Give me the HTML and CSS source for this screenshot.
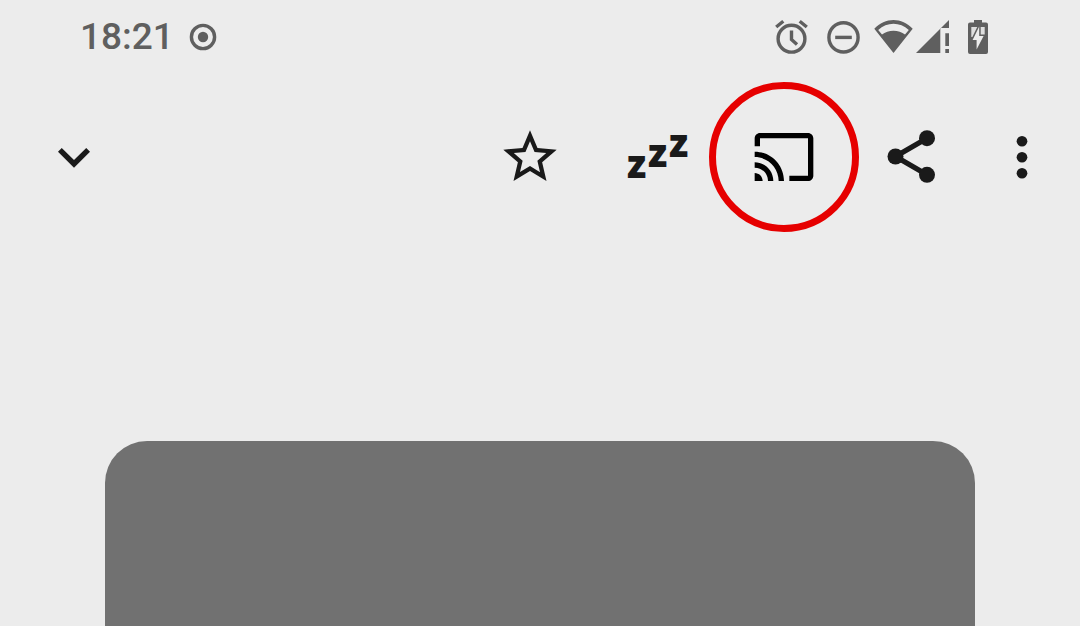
FILE: index.html
```html
<!DOCTYPE html>
<html lang="en">
<head>
<meta charset="utf-8">
<meta name="viewport" content="width=device-width, initial-scale=1">
<title>Player</title>
<link rel="stylesheet" href="styles.css">
</head>
<body>
<header class="status-bar">
  <time class="clock">18:21</time>
  <svg class="status-icon" width="28" height="28" viewBox="0 0 28 28" aria-hidden="true">
    <circle cx="14" cy="14" r="11.6" fill="none" stroke="currentColor" stroke-width="3.4"/>
    <circle cx="14" cy="14" r="5.2" fill="currentColor"/>
  </svg>
  <div class="status-group">
    <svg class="status-icon" width="40" height="36" viewBox="0 0 40 36" fill="none" stroke="currentColor" stroke-width="3.4" aria-hidden="true">
      <circle cx="17.5" cy="19.7" r="13.4"/>
      <path d="M2.2 8 9.3 2.2M25.7 2.2 32.8 8M17.5 11.5V20.5L23 25.4"/>
    </svg>
    <svg class="status-icon" width="36" height="36" viewBox="0 0 36 36" fill="none" stroke="currentColor" stroke-width="3.4" aria-hidden="true">
      <circle cx="17.5" cy="18.4" r="14.6"/>
      <path d="M9.2 18.4H25.8"/>
    </svg>
    <svg class="status-icon" width="82" height="36" viewBox="0 0 82 36" fill="currentColor" aria-hidden="true">
      <path fill-rule="evenodd" d="M0.3 9.8C11 -1.8 28 -1.8 38.7 9.8L19.5 34ZM4.2 11 8 15.6C14 10.4 25 10.4 31 15.6L34.8 11C26 2.8 13 2.8 4.2 11Z"/>
      <path d="M42 34 75 1V9H66.3V34ZM71.3 14.3H75V27H71.3ZM71.3 30H75V34H71.3Z"/>
    </svg>
    <svg class="status-icon" width="20" height="36" viewBox="0 0 20 36" fill="currentColor" aria-hidden="true">
      <path d="M6 1H14V3.6H18Q20 3.6 20 5.6V33Q20 35 18 35H2Q0 35 0 33V5.6Q0 3.6 2 3.6H6Z"/>
      <path class="cutout" d="M3.3 8H16.7V18H3.3Z"/>
      <path class="bolt" d="M11.2 7.5 4.6 21H8.6V30.5L15.6 17H11.2Z"/>
    </svg>
  </div>
</header>

<nav class="toolbar" aria-label="Player actions">
  <button class="tool tool-collapse" type="button" aria-label="Collapse">
    <svg class="icon" viewBox="0 0 24 24" aria-hidden="true"><path d="M7.41 8.59 12 13.17l4.59-4.58L18 10l-6 6-6-6z"/></svg>
  </button>
  <button class="tool" type="button" aria-label="Favourite">
    <svg class="icon" viewBox="0 0 24 24" aria-hidden="true"><path fill-rule="evenodd" d="M22 9.24l-7.19-.62L12 2 9.19 8.63 2 9.24l5.46 4.73L5.82 21 12 17.27 18.18 21l-1.63-7.03L22 9.24zM12 15.4l-3.76 2.27 1-4.28-3.32-2.88 4.38-.38L12 6.1l1.71 4.04 4.38.38-3.32 2.88 1 4.28L12 15.4z"/></svg>
  </button>
  <button class="tool" type="button" aria-label="Sleep timer">
    <svg class="icon zzz" viewBox="0 0 64 64" aria-hidden="true"><text x="2" y="53">z</text><text x="23" y="42">z</text><text x="44" y="32">z</text></svg>
  </button>
  <button class="tool tool-cast" type="button" aria-label="Cast">
    <svg class="icon" viewBox="0 0 24 24" aria-hidden="true"><path d="M21 3H3c-1.1 0-2 .9-2 2v3h2V5h18v14h-7v2h7c1.1 0 2-.9 2-2V5c0-1.1-.9-2-2-2zM1 18v3h3c0-1.66-1.34-3-3-3zm0-4v2c2.76 0 5 2.24 5 5h2c0-3.87-3.13-7-7-7zm0-4v2c4.97 0 9 4.03 9 9h2c0-6.08-4.93-11-11-11z"/></svg>
  </button>
  <button class="tool" type="button" aria-label="Share">
    <svg class="icon" viewBox="0 0 64 64" aria-hidden="true">
      <path d="M48 13.2 16.5 31.5 48 49.8" fill="none" stroke="currentColor" stroke-width="5.3"/>
      <circle cx="48" cy="13.2" r="8"/><circle cx="16.5" cy="31.5" r="8"/><circle cx="48" cy="49.8" r="8"/>
    </svg>
  </button>
  <button class="tool tool-more" type="button" aria-label="More options">
    <svg class="icon" viewBox="0 0 24 24" aria-hidden="true"><circle cx="12" cy="6.1" r="2"/><circle cx="12" cy="12.1" r="2"/><circle cx="12" cy="18.1" r="2"/></svg>
  </button>
</nav>

<main class="artwork" aria-label="Artwork"></main>
</body>
</html>
```
FILE: styles.css
```css
* {
  box-sizing: border-box;
}

body {
  margin: 0;
  min-height: 100vh;
  display: flex;
  flex-direction: column;
  background: #ececec;
  color: #1a1a1a;
  font-family: Roboto, "Liberation Sans", sans-serif;
}

.status-bar {
  display: flex;
  align-items: center;
  height: 74px;
  padding: 0 92px 0 80px;
  color: #5f5f5f;
}

.clock {
  margin-right: 15px;
  font-size: 37px;
  font-weight: 500;
  line-height: 44px;
}

.status-group {
  display: flex;
  align-items: center;
  gap: 12px;
  margin-left: auto;
}

.status-icon {
  display: block;
  flex: none;
}

.cutout {
  fill: #dedede;
}

.bolt {
  fill: #ececec;
  stroke: #5f5f5f;
  stroke-width: 3px;
  paint-order: stroke;
}

.toolbar {
  display: flex;
  align-items: center;
  height: 166px;
  padding: 0 11px 0 10px;
}

.tool {
  position: relative;
  display: flex;
  align-items: center;
  justify-content: center;
  width: 127px;
  height: 150px;
  padding: 0;
  border: 0;
  background: none;
  color: inherit;
}

.tool-collapse {
  margin-right: auto;
}

.tool-more {
  width: 95px;
}

.tool-cast {
  color: #000;
}

.tool-cast::after {
  content: "";
  position: absolute;
  inset: 0 -12px 0 -11px;
  border: 7px solid #e60000;
  border-radius: 50%;
}

.icon {
  display: block;
  width: 64px;
  height: 64px;
  fill: currentColor;
  overflow: visible;
}

.zzz {
  font-family: "Open Sans", "Liberation Sans", sans-serif;
  font-size: 38px;
  font-weight: 800;
}

.artwork {
  flex: 1;
  margin: 201px 105px 0;
  border-radius: 42px 42px 0 0;
  background: #717171;
}
```
